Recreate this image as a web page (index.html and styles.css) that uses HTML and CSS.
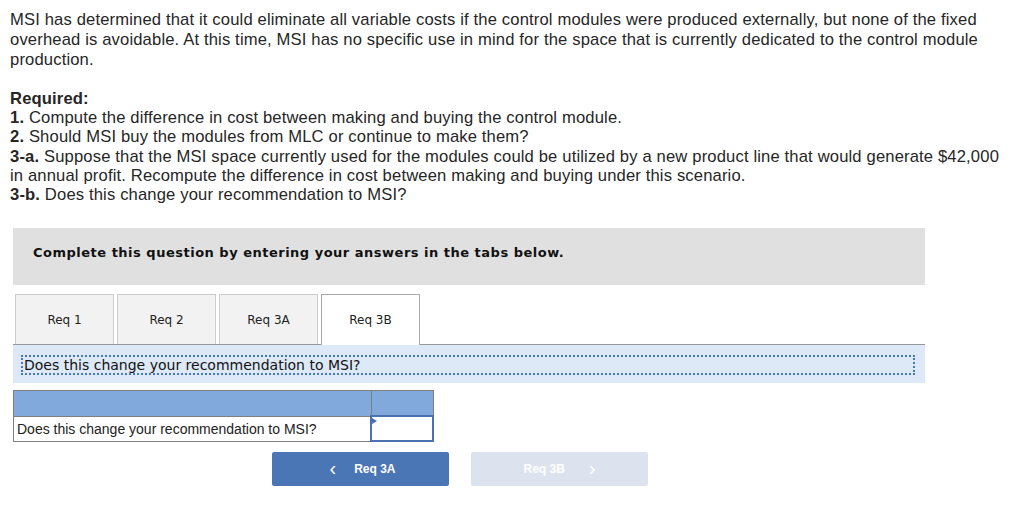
FILE: index.html
```html
<!DOCTYPE html>
<html>
<head>
<meta charset="utf-8">
<link rel="stylesheet" href="styles.css">
</head>
<body>
<div class="page">
  <div class="intro">
    <p class="para">MSI has determined that it could eliminate all variable costs if the control modules were produced externally, but none of the fixed<br>overhead is avoidable. At this time, MSI has no specific use in mind for the space that is currently dedicated to the control module<br>production.</p>
    <div class="req">
      <div><b>Required:</b></div>
      <div><b>1.</b> Compute the difference in cost between making and buying the control module.</div>
      <div><b>2.</b> Should MSI buy the modules from MLC or continue to make them?</div>
      <div><b>3-a.</b> Suppose that the MSI space currently used for the modules could be utilized by a new product line that would generate $42,000<br>in annual profit. Recompute the difference in cost between making and buying under this scenario.</div>
      <div><b>3-b.</b> Does this change your recommendation to MSI?</div>
    </div>
  </div>

  <div class="panel">
    <div class="banner">Complete this question by entering your answers in the tabs below.</div>
    <div class="tabs">
      <div class="tab">Req 1</div>
      <div class="tab">Req 2</div>
      <div class="tab">Req 3A</div>
      <div class="tab active">Req 3B</div>
    </div>
    <div class="qband"><div class="qtext">Does this change your recommendation to MSI?</div></div>
    <table class="grid">
      <tr class="head"><td class="c1"></td><td class="c2"></td></tr>
      <tr class="row"><td class="c1">Does this change your recommendation to MSI?</td><td class="c2 input"><span class="tri"></span></td></tr>
    </table>
    <div class="nav">
      <div class="btn prev"><span class="chev">&#x2039;</span><span>Req 3A</span></div>
      <div class="btn next"><span>Req 3B</span><span class="chev">&#x203A;</span></div>
    </div>
  </div>
</div>
</body>
</html>
```
FILE: styles.css
```css
html, body { margin: 0; padding: 0; background: #fff; }
.page { width: 1024px; }
.intro {
  padding: 10px 0 0 10px;
  font-family: "Liberation Sans", Arial, sans-serif;
  font-size: 16.6px;
  letter-spacing: 0.15px;
  color: #262626;
  width: 1010px;
  white-space: nowrap;
}
.para { margin: 0 0 19px 0; line-height: 20px; }
.req { line-height: 19.2px; }
.req b { font-weight: 700; }

.panel { padding: 24px 0 0 13px; width: 912px; }
.banner {
  background: #e0e0e0;
  height: 57px;
  box-sizing: border-box;
  padding: 17px 0 0 20px;
  font-family: "DejaVu Sans", Verdana, sans-serif;
  font-weight: bold;
  font-size: 13px;
  letter-spacing: 0.5px;
  color: #111;
}
.tabs {
  display: flex;
  gap: 3px;
  padding: 9px 0 0 2px;
  border-bottom: 1px solid #999;
  height: 50px;
}
.tab {
  width: 99px;
  height: 50px;
  box-sizing: border-box;
  background: #f2f2f2;
  border: 1px solid #ccc;
  border-bottom: none;
  display: flex;
  align-items: center;
  justify-content: center;
  font-family: "DejaVu Sans", Verdana, sans-serif;
  font-size: 12px;
  color: #222;
}
.tab.active { background: #fff; border-color: #aaa; height: 51px; position: relative; z-index: 1; }
.qband {
  background: #dde9f7;
  height: 38px;
  box-sizing: border-box;
  padding: 10px 10px 0 8px;
}
.qtext {
  border: 2px dotted #4a78c0;
  height: 20px;
  box-sizing: border-box;
  font-family: "DejaVu Sans", Verdana, sans-serif;
  font-size: 14px;
  line-height: 16px;
  padding-left: 1px;
  color: #111;
}
.grid {
  margin-top: 7px;
  border-collapse: collapse;
  width: 421px;
  font-family: "Liberation Sans", Arial, sans-serif;
  font-size: 14px;
  color: #222;
}
.grid td { border: 1px solid #7f7f7f; padding: 0; }
.head td { background: #82a9dc; height: 24px; }
.row td { height: 23px; }
.row .c1 { padding-left: 3px; }
.c1 { width: 353px; }
.input { border: 2px solid #4a72b0 !important; position: relative; vertical-align: top; }
.tri {
  position: absolute; left: 0; top: 1px;
  width: 0; height: 0;
  border-top: 3px solid transparent;
  border-bottom: 3px solid transparent;
  border-left: 5px solid #4a72b0;
}
.nav {
  display: flex;
  gap: 22px;
  margin-top: 10px;
  padding-left: 259px;
}
.btn {
  width: 177px;
  height: 34px;
  border-radius: 2px;
  display: flex;
  align-items: center;
  justify-content: center;
  box-sizing: border-box;
  font-family: "Liberation Sans", Arial, sans-serif;
  font-weight: bold;
  font-size: 12px;
  color: #fff;
}
.prev { background: #4a76b5; gap: 18px; padding-left: 4px; }
.next { background: #dce3ef; color: #fff; gap: 24px; }
.chev { font-size: 20px; font-weight: normal; line-height: 1; margin-top: -3px; }
```
